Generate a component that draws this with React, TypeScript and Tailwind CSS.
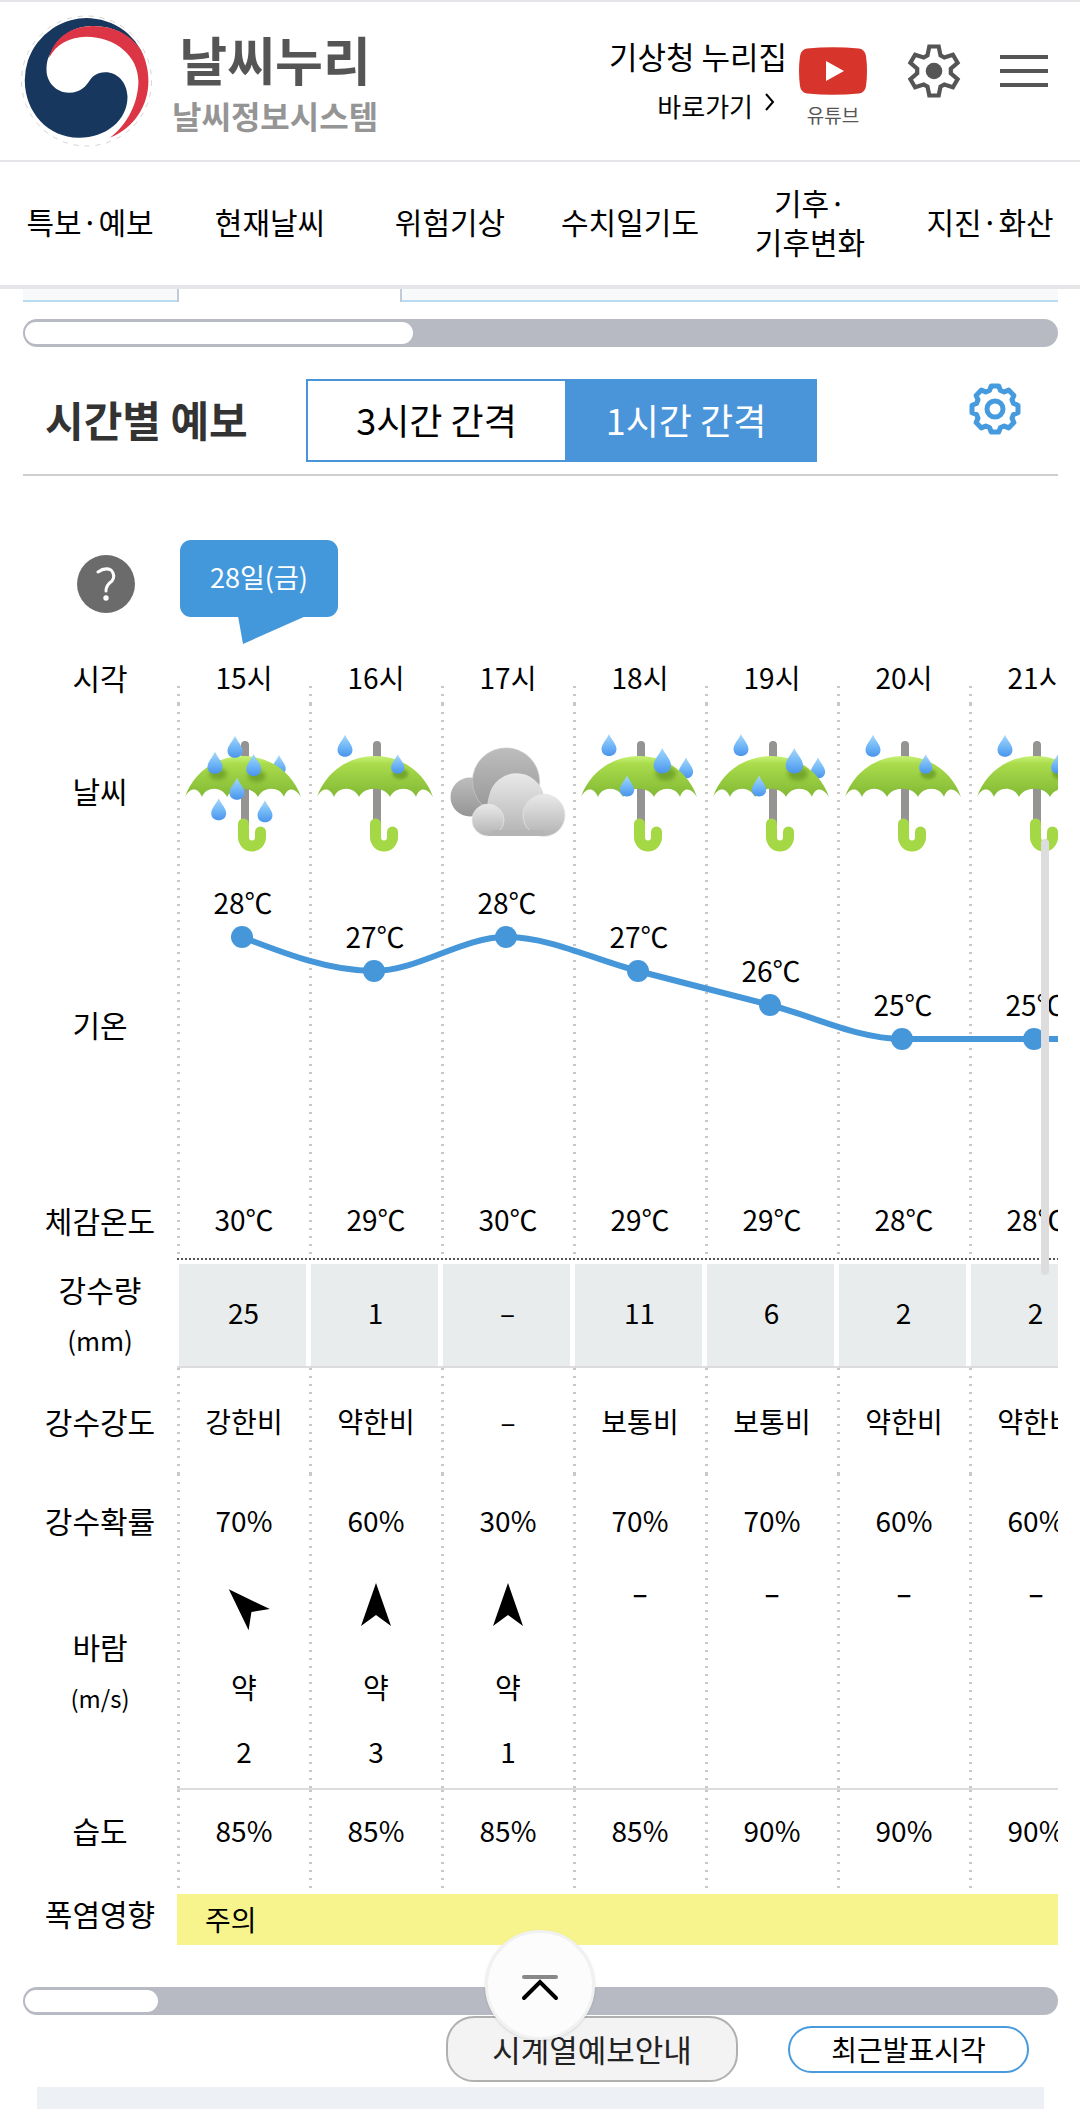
import React from 'react'
import clsx from 'clsx'

type Sky = 'light' | 'normal' | 'heavy' | 'cloud'

type Hour = {
  hour: string
  sky: Sky
  temp: number
  feels: number
  rain: string
  intensity: string
  chance: number
  wind?: { deg: number; label: string; speed: number }
  humidity: number
}

const hours: Hour[] = [
  { hour: '15시', sky: 'heavy', temp: 28, feels: 30, rain: '25', intensity: '강한비', chance: 70, wind: { deg: -45, label: '약', speed: 2 }, humidity: 85 },
  { hour: '16시', sky: 'light', temp: 27, feels: 29, rain: '1', intensity: '약한비', chance: 60, wind: { deg: 0, label: '약', speed: 3 }, humidity: 85 },
  { hour: '17시', sky: 'cloud', temp: 28, feels: 30, rain: '–', intensity: '–', chance: 30, wind: { deg: 0, label: '약', speed: 1 }, humidity: 85 },
  { hour: '18시', sky: 'normal', temp: 27, feels: 29, rain: '11', intensity: '보통비', chance: 70, humidity: 85 },
  { hour: '19시', sky: 'normal', temp: 26, feels: 29, rain: '6', intensity: '보통비', chance: 70, humidity: 90 },
  { hour: '20시', sky: 'light', temp: 25, feels: 28, rain: '2', intensity: '약한비', chance: 60, humidity: 90 },
  { hour: '21시', sky: 'light', temp: 25, feels: 28, rain: '2', intensity: '약한비', chance: 60, humidity: 90 },
]

const menu = ['특보·예보', '현재날씨', '위험기상', '수치일기도', '기후·\n기후변화', '지진·화산']

// dotted rule on the left side of every hour column
const rule =
  'bg-[image:repeating-linear-gradient(to_bottom,#c8c8c8_0px,#c8c8c8_2px,transparent_2px,transparent_8px)] bg-[length:3px_100%] bg-left-top bg-no-repeat'

const gearPoints = (teeth: number, corners: number[][]) => {
  const points: string[] = []
  for (let i = 0; i < teeth; i++) {
    const a = (i * 2 * Math.PI) / teeth
    corners.forEach(([x, y]) => {
      points.push(`${(x * Math.cos(a) - y * Math.sin(a)).toFixed(1)},${(x * Math.sin(a) + y * Math.cos(a)).toFixed(1)}`)
    })
  }
  return points.join(' ')
}

const Logo = () => (
  <svg viewBox="0 0 134 134" className="size-[134px] shrink-0" aria-hidden="true">
    <circle cx="66.5" cy="67" r="65" fill="none" stroke="#d4d4d4" strokeWidth="1" strokeDasharray="5 6" />
    <path
      fill="#17375e"
      d="M121 36 A62 62 0 0 0 4.8 67 C5 98 28 123.7 58.5 123.7 C85 124 107.5 107 107.5 82.7 C107 68 97 58 85 58.3 C77 58.5 73 62 70 66 C66 72 61 78.7 49 78.7 C36 78.7 26.5 68 26.5 56 C26.5 48 28 43 31 39 C38 22 54 12 73 12 C94 12 108 20 121 36Z"
    />
    <path
      fill="#dc3545"
      d="M29 44 C34 23 52 12 73 12 C94 12 110 20 121 36 C126 46 128.4 56 128.4 67 C128.4 92 114 114 90 123.7 C108 110 118.4 88 118.4 67 C118 42 96 23 66 22.7 C50 23 36 30 29 44Z"
    />
  </svg>
)

type DropProps = { x: number; y: number; s?: number; shadow?: boolean }

const Drop = ({ x, y, s = 1, shadow }: DropProps) => (
  <g transform={`translate(${x} ${y}) scale(${s})`}>
    {shadow && <ellipse cx="3" cy="11" rx="9" ry="6" fill="#4d7d12" opacity="0.5" filter="url(#soft)" />}
    <path d="M0 -11 C2 -6 7.5 -1 7.5 4 C7.5 8.5 4 11 0 11 C-4 11 -7.5 8.5 -7.5 4 C-7.5 -1 -2 -6 0 -11Z" fill="url(#drop)" />
  </g>
)

const Umbrella = ({ sky }: { sky: Sky }) => (
  <>
    <path d="M61 13 V92" stroke="#969492" strokeWidth="8" strokeLinecap="round" />
    <path d="M59.5 92 V105 A8.5 9 0 0 0 76.5 105 V100" fill="none" stroke="#a5d845" strokeWidth="11" strokeLinecap="round" />
    {sky === 'heavy' && <Drop x={95} y={33} s={0.9} />}
    {sky === 'normal' && <Drop x={106} y={36} s={0.95} />}
    <path
      fill="url(#canopy)"
      d="M1 65 C9 41 32 24 59 24 C86 24 109 41 117 65 C111 55 103 55 100 65 C96 54 79 54 74 65 C69 54 48 54 43 65 C38 54 22 54 18 65 C14 55 6 55 1 65Z"
    />
    {sky === 'heavy' && (
      <>
        <Drop x={51} y={14.7} />
        <Drop x={31} y={30.7} shadow />
        <Drop x={69.7} y={33} shadow />
        <Drop x={53} y={56.7} />
        <Drop x={34.7} y={77.3} />
        <Drop x={81} y={79.3} />
      </>
    )}
    {sky === 'light' && (
      <>
        <Drop x={29} y={13.7} />
        <Drop x={81.7} y={32} s={0.88} shadow />
      </>
    )}
    {sky === 'normal' && (
      <>
        <Drop x={29} y={13} />
        <Drop x={82.3} y={28.7} s={1.16} shadow />
        <Drop x={47} y={54} s={0.96} />
      </>
    )}
  </>
)

const Cloud = () => (
  <>
    <circle cx="22" cy="65" r="19.5" fill="url(#cloudDark)" />
    <circle cx="58" cy="49.5" r="33.5" fill="url(#cloudDark)" stroke="#c4c4c4" strokeWidth="0.8" />
    <path d="M40 104 C47 70 36 80 41 64 A28 28 0 0 1 96 64 L97 104Z" fill="url(#cloudLight)" />
    <circle cx="96" cy="83.3" r="21" fill="url(#cloudLight)" stroke="#e3e3e3" strokeWidth="0.8" />
    <circle cx="40" cy="88" r="16" fill="url(#cloudLight)" stroke="#e3e3e3" strokeWidth="0.8" />
    <path d="M44 98 H96 V104 H40Z" fill="#b5b5b5" />
  </>
)

const SkyIcon = ({ sky }: { sky: Sky }) => (
  <svg viewBox="0 0 120 120" className="mx-auto block size-[120px] overflow-visible">
    {sky === 'cloud' ? <Cloud /> : <Umbrella sky={sky} />}
  </svg>
)

const SkyDefs = () => (
  <svg className="absolute size-0" aria-hidden="true">
    <defs>
      <linearGradient id="drop" x1="0" y1="0" x2="0" y2="1">
        <stop offset="0" stopColor="#a6d8fb" />
        <stop offset="0.5" stopColor="#74b9f7" />
        <stop offset="1" stopColor="#4a94ec" />
      </linearGradient>
      <linearGradient id="canopy" x1="0" y1="0" x2="0" y2="1">
        <stop offset="0" stopColor="#c8f274" />
        <stop offset="0.2" stopColor="#a9db4b" />
        <stop offset="1" stopColor="#82b935" />
      </linearGradient>
      <linearGradient id="cloudDark" x1="0" y1="0" x2="0" y2="1">
        <stop offset="0" stopColor="#bdbdbd" />
        <stop offset="1" stopColor="#959595" />
      </linearGradient>
      <linearGradient id="cloudLight" x1="0" y1="0" x2="0" y2="1">
        <stop offset="0" stopColor="#e9e9e9" />
        <stop offset="1" stopColor="#b3b3b3" />
      </linearGradient>
      <filter id="soft" x="-50%" y="-50%" width="200%" height="200%">
        <feGaussianBlur stdDeviation="2" />
      </filter>
    </defs>
  </svg>
)

const COL = 132
const tempY = (temp: number) => 57 + (28 - temp) * 34

const TempLine = () => {
  const pts = hours.map((h, i) => ({ x: 65 + i * COL, y: tempY(h.temp) }))
  pts.push({ x: 65 + hours.length * COL, y: pts[pts.length - 1].y })

  const slope = (i: number) => (pts[i + 1].y - pts[i].y) / COL
  const tangents = pts.map((_, i) => {
    if (i === 0) return slope(0) * 1.5
    if (i === pts.length - 1) return 0
    const a = slope(i - 1)
    const b = slope(i)
    return a * b <= 0 ? 0 : (a + b) / 2
  })

  const third = COL / 3
  const d = pts
    .map((p, i) => {
      if (i === 0) return `M${p.x} ${p.y}`
      const prev = pts[i - 1]
      return `C${prev.x + third} ${prev.y + tangents[i - 1] * third} ${p.x - third} ${p.y - tangents[i] * third} ${p.x} ${p.y}`
    })
    .join(' ')

  return (
    <svg viewBox="0 0 924 300" className="absolute top-0 left-0 h-[300px] w-[924px]">
      <path d={d} fill="none" stroke="#4597da" strokeWidth="6" />
      {pts.map((p) => (
        <circle key={p.x} cx={p.x} cy={p.y} r="11" fill="#4597da" />
      ))}
    </svg>
  )
}

const Track = ({ thumb }: { thumb: string }) => (
  <div className="h-7 rounded-full bg-[#b7bac2] px-0.5 py-[3px]">
    <div className={clsx('h-[22px] rounded-full bg-white', thumb)} />
  </div>
)

const Header = () => (
  <header className="flex h-[162px] items-center border-y-2 border-[#e5e5ea] pr-8 pl-5">
    <a href="#home" className="flex items-center gap-[18px]">
      <Logo />
      <span className="flex flex-col items-center pt-3 leading-[56px] font-bold">
        <span className="text-[52px] text-[#555]">날씨누리</span>
        <span className="text-[32px] text-[#959595]">날씨정보시스템</span>
      </span>
    </a>

    <div className="ml-auto flex items-center">
      <a href="#kma" className="mr-3 flex flex-col items-end leading-[50px]">
        <span className="text-[31px]">기상청 누리집</span>
        <span className="flex items-center gap-3 pr-3 text-[26px]">
          바로가기
          <svg viewBox="0 0 10 18" className="mb-2 h-[18px] w-2.5" fill="none" stroke="black" strokeWidth="2">
            <path d="M1 1 L8 9 L1 17" />
          </svg>
        </span>
      </a>
      <a href="#youtube" className="mr-10 flex flex-col items-center pt-3">
        <svg viewBox="0 0 68 48" className="h-12 w-[68px]">
          <path d="M8 1.5 Q34 -1 60 1.5 Q66 2.5 67 9 Q69 24 67 39 Q66 45.5 60 46.5 Q34 49 8 46.5 Q2 45.5 1 39 Q-1 24 1 9 Q2 2.5 8 1.5Z" fill="#d7342b" />
          <path d="M27 14 L45 24 L27 34Z" fill="white" />
        </svg>
        <span className="mt-2 text-[19px] leading-6 text-[#555]">유튜브</span>
      </a>
      <button type="button" aria-label="설정" className="mr-[39px] mb-5">
        <svg viewBox="-27 -27 54 54" className="size-[54px]">
          <polygon points={gearPoints(6, [[-6.5, -15.7], [-4.7, -24.5], [4.7, -24.5], [6.5, -15.7]])} fill="none" stroke="#555" strokeWidth="4.2" />
          <circle r="8.3" fill="#555" />
        </svg>
      </button>
      <button type="button" aria-label="전체메뉴" className="mb-5 flex w-12 flex-col gap-2.5">
        <span className="h-1 bg-[#555]" />
        <span className="h-1 bg-[#555]" />
        <span className="h-1 bg-[#555]" />
      </button>
    </div>
  </header>
)

const RowLabel = ({ children, className }: { children: React.ReactNode; className?: string }) => (
  <th scope="row" className={clsx('text-[30px] font-normal', className)}>
    {children}
  </th>
)

const ForecastTable = () => (
  <table className="w-[1078px] table-fixed border-separate border-spacing-0 text-center text-[28px]">
    <colgroup>
      <col className="w-[154px]" />
      {hours.map((h) => (
        <col key={h.hour} className="w-[132px]" />
      ))}
    </colgroup>
    <tbody>
      <tr className="h-[178px] align-top">
        <td className="pt-[79px] pl-[54px] text-left">
          <button type="button" aria-label="도움말" className="flex size-[58px] items-center justify-center rounded-full bg-[#6b6b6b]">
            <svg viewBox="0 0 20 34" className="h-[34px] w-5" fill="none" stroke="white" strokeWidth="3" strokeLinecap="round">
              <path d="M2 5 Q9 0 15 3 Q20 8 16 14 Q10 18 10 24" />
              <circle cx="10" cy="31" r="1.2" fill="white" />
            </svg>
          </button>
        </td>
        <td colSpan={7} className="pt-16 pl-[3px]">
          <div className="relative h-[77px] w-[158px] rounded-[11px] bg-[#4398db] text-[27px] leading-[74px] text-white">
            28일(금)
            <svg viewBox="0 0 68 28" className="absolute top-[76px] left-[58px] h-7 w-[68px]">
              <path d="M0 0 H68 L5 28Z" fill="#4398db" />
            </svg>
          </div>
        </td>
      </tr>
      <tr className="h-[50px]">
        <RowLabel className="pb-1">시각</RowLabel>
        {hours.map((h) => (
          <td
            key={h.hour}
            className="bg-[image:repeating-linear-gradient(to_bottom,#c8c8c8_0px,#c8c8c8_2px,transparent_2px,transparent_8px)] bg-[length:3px_18px] bg-left-bottom bg-no-repeat pb-1 pl-0.5"
          >
            {h.hour}
          </td>
        ))}
      </tr>
      <tr className="h-[176px]">
        <RowLabel className="pb-1">날씨</RowLabel>
        {hours.map((h) => (
          <td key={h.hour} className={clsx('pl-0.5', rule)}>
            <SkyIcon sky={h.sky} />
          </td>
        ))}
      </tr>
      <tr className="h-[300px]">
        <RowLabel className="pb-3">기온</RowLabel>
        <td colSpan={7}>
          <div className="relative flex h-[300px]">
            {hours.map((h) => (
              <div key={h.hour} className={clsx('w-[132px]', rule)} style={{ paddingTop: tempY(h.temp) - 56 }}>
                <span className="leading-10">{h.temp}℃</span>
              </div>
            ))}
            <TempLine />
          </div>
        </td>
      </tr>
      <tr className="h-20">
        <RowLabel>체감온도</RowLabel>
        {hours.map((h) => (
          <td key={h.hour} className="p-0">
            <div className={clsx('h-[78px] pl-0.5 leading-[78px]', rule)}>{h.feels}℃</div>
            <div className="h-0.5 bg-[repeating-linear-gradient(to_right,#555_0px,#555_2px,transparent_2px,transparent_4px)]" />
          </td>
        ))}
      </tr>
      <tr className="h-[108px]">
        <RowLabel className="leading-[49px]">
          강수량
          <br />
          <span className="text-[26px]">(mm)</span>
        </RowLabel>
        {hours.map((h) => (
          <td key={h.hour} className="border-b-2 border-[#dcdcdc] pt-1 pr-[3px] pl-0.5">
            <div className="h-[102px] bg-[#e8ecec] pl-0.5 leading-[97px]">{h.rain}</div>
          </td>
        ))}
      </tr>
      <tr className="h-[106px]">
        <RowLabel>강수강도</RowLabel>
        {hours.map((h) => (
          <td key={h.hour} className={clsx('pl-0.5 whitespace-nowrap', rule)}>
            {h.intensity}
          </td>
        ))}
      </tr>
      <tr className="h-24">
        <RowLabel className="pb-1">강수확률</RowLabel>
        {hours.map((h) => (
          <td key={h.hour} className={clsx('pb-1 pl-0.5', rule)}>
            {h.chance}%
          </td>
        ))}
      </tr>
      <tr className="h-[220px]">
        <RowLabel className="pb-4 leading-[49px]">
          바람
          <br />
          <span className="text-[24px]">(m/s)</span>
        </RowLabel>
        {hours.map((h) => (
          <td key={h.hour} className={clsx('border-b-2 border-[#dcdcdc] pl-0.5 align-top leading-[64px]', rule)}>
            {h.wind ? (
              <>
                <svg
                  viewBox="0 0 30 43"
                  className="mx-auto mt-[13px] mb-[29px] block h-[43px] w-[30px] overflow-visible"
                  style={{ transform: `rotate(${h.wind.deg}deg)` }}
                >
                  <path d="M15 0 L30 43 L15 32 L0 43Z" />
                </svg>
                <div>{h.wind.label}</div>
                <div>{h.wind.speed}</div>
              </>
            ) : (
              <div className="leading-[44px] font-medium">–</div>
            )}
          </td>
        ))}
      </tr>
      <tr className="h-[104px]">
        <RowLabel className="pb-6">습도</RowLabel>
        {hours.map((h) => (
          <td key={h.hour} className={clsx('pb-6 pl-0.5', rule)}>
            {h.humidity}%
          </td>
        ))}
      </tr>
      <tr className="h-[51px]">
        <RowLabel className="pb-3 leading-[39px]">폭염영향</RowLabel>
        <td colSpan={7} className="bg-[#f8f48d] pb-0.5 pl-7 text-left">
          주의
        </td>
      </tr>
    </tbody>
  </table>
)

const App = () => {
  return (
    <div className="overflow-hidden bg-white font-['Noto_Sans_CJK_KR',sans-serif] text-black">
      <SkyDefs />
      <Header />

      <nav className="grid h-[127px] grid-cols-6 items-center border-b-4 border-[#e5e5ea] pb-1 text-center text-[30px] leading-[39px]">
        {menu.map((item) => (
          <a key={item} href="#menu" className="whitespace-pre-line">
            {item}
          </a>
        ))}
      </nav>

      <main className="pr-[22px] pl-[23px]">
        <div className="mb-[17px] flex h-[13px]">
          <div className="w-[154px] border-b-2 border-[#b8dcf2] bg-[#f7f9fb]" />
          <div className="w-[225px] border-x-2 border-[#c3cbd9]" />
          <div className="flex-1 border-b-2 border-[#b8dcf2] bg-[#f7f9fb]" />
        </div>
        <Track thumb="w-[388px]" />

        <div className="mt-8 flex items-center border-b-2 border-[#cfcfcf] pb-3 pl-[22px]">
          <h2 className="w-[261px] pb-1 text-[42px] font-bold text-[#333]">시간별 예보</h2>
          <div className="flex h-[83px] w-[511px] border-2 border-[#4a95d9] text-[36px]">
            <button type="button" className="flex-1 pb-1">
              3시간 간격
            </button>
            <button type="button" className="w-[250px] bg-[#4a95d9] pr-2 pb-1 text-white">
              1시간 간격
            </button>
          </div>
          <button type="button" aria-label="예보 설정" className="mt-1 mr-9 ml-auto self-start">
            <svg viewBox="-27 -27 54 54" className="-mt-px size-[54px]" fill="none" stroke="#459bdd" strokeWidth="5" strokeLinejoin="round">
              <polygon points={gearPoints(8, [[-5.5, -18.5], [-3.7, -23], [3.7, -23], [5.5, -18.5]])} />
              <circle r="8" />
            </svg>
          </button>
        </div>

        <div className="relative overflow-hidden">
          <ForecastTable />
          <div className="absolute top-[363px] right-[9px] h-[436px] w-2 rounded-full bg-[#dddddf]" />
        </div>

        <div className="mt-[42px]">
          <Track thumb="w-[133px]" />
        </div>

        <div className="mt-px flex items-center justify-end gap-[50px] pr-[29px]">
          <button type="button" className="h-[66px] w-[292px] rounded-[28px] border-2 border-[#b0b0b0] bg-[#f3f3f3] text-[31px] text-[#222]">
            시계열예보안내
          </button>
          <button type="button" className="flex h-[47px] w-[241px] items-center justify-center rounded-full border-2 border-[#4a9ade] text-[28px]">
            최근발표시각
          </button>
        </div>

        <div className="mx-3.5 mt-[5px] h-[22px] bg-[#edf1f6]" />
      </main>

      <button
        type="button"
        aria-label="맨 위로"
        className="fixed bottom-[69px] left-1/2 flex size-[110px] -translate-x-1/2 items-center justify-center rounded-full border-3 border-[#f1f1f1] bg-[#fcfcfc] shadow-sm"
      >
        <svg viewBox="0 0 40 28" className="mt-1 h-7 w-10" fill="none" strokeWidth="4" strokeLinecap="round">
          <path d="M4 4 H36" stroke="#888" />
          <path d="M4 25 L20 9 L36 25" stroke="black" />
        </svg>
      </button>
    </div>
  )
}

export default App
